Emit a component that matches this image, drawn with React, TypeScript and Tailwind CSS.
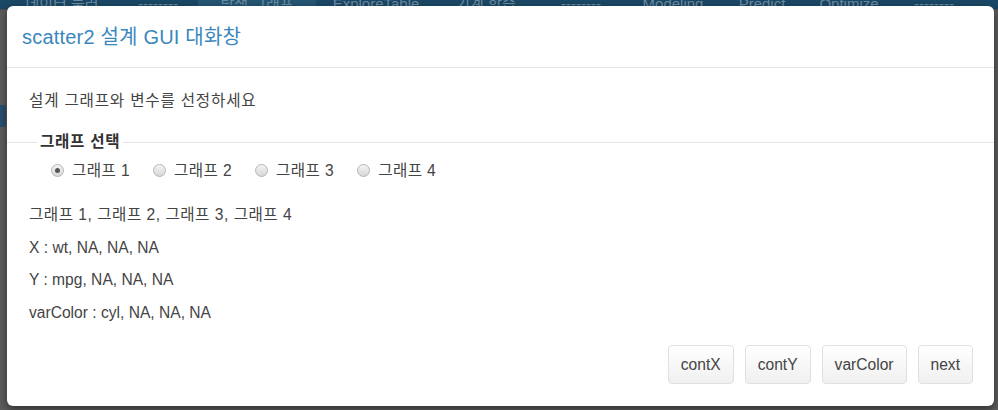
import React from "react";

const navItems = [
  { label: "데이터 불러", w: "w-[112px]", active: false },
  { label: "--------", w: "w-[80px]", active: false },
  { label: "탐색 그래프", w: "w-[118px]", active: true },
  { label: "ExploreTable", w: "w-[120px]", active: false },
  { label: "기계 학습", w: "w-[100px]", active: false },
  { label: "--------", w: "w-[90px]", active: false },
  { label: "Modeling", w: "w-[94px]", active: false },
  { label: "Predict", w: "w-[84px]", active: false },
  { label: "Optimize", w: "w-[90px]", active: false },
  { label: "--------", w: "w-[80px]", active: false },
];

const graphs = ["그래프 1", "그래프 2", "그래프 3", "그래프 4"];
const buttons = ["contX", "contY", "varColor", "next"];

const Radio = ({ checked }: { checked: boolean }) => (
  <span className="w-[13px] h-[13px] rounded-full border border-[#b5b5b5] bg-gradient-to-b from-[#f4f4f4] to-[#d8d8d8] flex items-center justify-center">
    {checked && <span className="w-[5px] h-[5px] rounded-full bg-[#555]" />}
  </span>
);

const App = () => {
  return (
    <div
      className="relative w-[998px] h-[410px] overflow-hidden bg-[#5c5c5c]"
      style={{ fontFamily: '"Liberation Sans", Arial, "Noto Sans CJK KR", sans-serif' }}
    >
      {/* page behind the overlay */}
      <div className="h-[9px] bg-[#1b4866] overflow-hidden flex items-end">
        <div className="flex -mb-[4px] pl-[6px]">
          {navItems.map((n, i) => (
            <div
              key={i}
              className={`${n.w} text-[15px] leading-[15px] text-[#6d8ca2] text-center pb-[2px] ${
                n.active ? "bg-[#245674]" : ""
              }`}
            >
              {n.label}
            </div>
          ))}
        </div>
      </div>
      <div className="h-px bg-[#4a4a4a]" />
      <div className="mt-[95px] w-[6px] h-[22px] bg-[#2a4f6e]" />

      {/* modal */}
      <div className="absolute left-[7px] top-[6px] w-[987px] h-[400px] bg-white rounded-[6px] shadow-[0_3px_9px_rgba(0,0,0,0.5)] flex flex-col">
        <div className="h-[62px] border-b border-[#e5e5e5] pl-[15px] flex items-center">
          <h4 className="text-[20px] text-[#3a87bd] tracking-[0.2px]">scatter2 설계 GUI 대화창</h4>
        </div>
        <div className="flex-1 flex flex-col text-[15.6px] text-[#333]">
          <p className="pl-[22px] pt-[22px] leading-[21px] tracking-[0.8px] text-[#444]">설계 그래프와 변수를 선정하세요</p>
          <fieldset className="mt-[22px] border-t border-[#e5e5e5]">
            <legend className="ml-[30px] px-[3px] font-bold text-[#333] leading-[18px] tracking-[0.7px]">그래프 선택</legend>
            <div className="flex items-center pl-[44px] pt-[8px] text-[#444] tracking-[0.4px]">
              {graphs.map((g, i) => (
                <label key={g} className="flex items-center gap-[8px] mr-[23px]">
                  <Radio checked={i === 0} />
                  <span>{g}</span>
                </label>
              ))}
            </div>
          </fieldset>
          <div className="pl-[22px] pt-[23px] flex flex-col gap-[12px] leading-[20.5px] text-[#444]">
            <p className="tracking-[0.5px]">그래프 1, 그래프 2, 그래프 3, 그래프 4</p>
            <p>X : wt, NA, NA, NA</p>
            <p>Y : mpg, NA, NA, NA</p>
            <p>varColor : cyl, NA, NA, NA</p>
          </div>
          <div className="mt-auto mb-[22px] pr-[21px] flex justify-end gap-[11px]">
            {buttons.map((b) => (
              <button
                key={b}
                className="h-[39px] px-[12px] rounded-[4px] border border-[#e0e0e0] bg-gradient-to-b from-white to-[#f0f0f0] text-[#444]"
              >
                {b}
              </button>
            ))}
          </div>
        </div>
      </div>
    </div>
  );
};

export default App;
